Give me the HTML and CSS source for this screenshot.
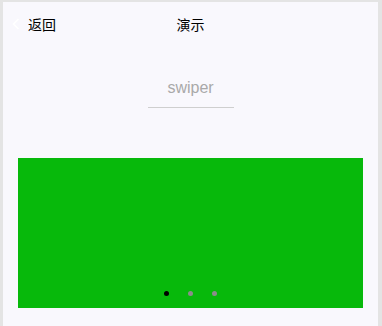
FILE: index.html
```html
<!DOCTYPE html>
<html>
<head>
<meta charset="utf-8">
<link rel="stylesheet" href="styles.css">
</head>
<body>
<div class="frame">
  <div class="navbar">
    <div class="back">
      <svg class="chev" width="8" height="12" viewBox="0 0 8 12"><path d="M6.5 1 L1.5 6 L6.5 11" fill="none" stroke="#ffffff" stroke-width="1.6"/></svg>
      <span class="back-text">返回</span>
    </div>
    <div class="title">演示</div>
  </div>
  <div class="section-head">
    <div class="section-title">swiper</div>
    <div class="section-line"></div>
  </div>
  <div class="swiper">
    <div class="dots">
      <span class="dot active"></span>
      <span class="dot"></span>
      <span class="dot"></span>
    </div>
  </div>
</div>
</body>
</html>
```
FILE: styles.css
```css
html, body {
  margin: 0;
  padding: 0;
  background: #e4e4e4;
  height: 326px;
  overflow: hidden;
}
.frame {
  margin: 2px 4px 0 3px;
  height: 324px;
  background: #f9f8fd;
  font-family: "Noto Sans CJK SC", "Noto Sans", sans-serif;
  color: #000;
}
.navbar {
  position: relative;
  height: 44px;
  display: flex;
  align-items: center;
}
.back {
  display: flex;
  align-items: center;
  padding-left: 9px;
}
.chev {
  display: block;
}
.back-text {
  margin-left: 8px;
  font-size: 14px;
  line-height: 20px;
}
.title {
  position: absolute;
  left: 0;
  right: 0;
  top: 0;
  height: 44px;
  line-height: 44px;
  text-align: center;
  font-size: 14px;
  pointer-events: none;
}
.section-head {
  display: flex;
  flex-direction: column;
  align-items: center;
  padding-top: 32px;
}
.section-title {
  font-family: "Liberation Sans", Arial, sans-serif;
  font-size: 16px;
  line-height: 20px;
  color: #a9a9a9;
}
.section-line {
  margin-top: 9px;
  width: 86px;
  height: 1px;
  background: #cfcfcf;
}
.swiper {
  margin: 50px 15px 0 15px;
  height: 150px;
  background: #07b90b;
  display: flex;
  align-items: flex-end;
  justify-content: center;
}
.dots {
  display: flex;
  gap: 19px;
  margin-bottom: 12px;
}
.dot {
  width: 5px;
  height: 5px;
  border-radius: 50%;
  background: #8c8c8c;
}
.dot.active {
  background: #000;
}
```
